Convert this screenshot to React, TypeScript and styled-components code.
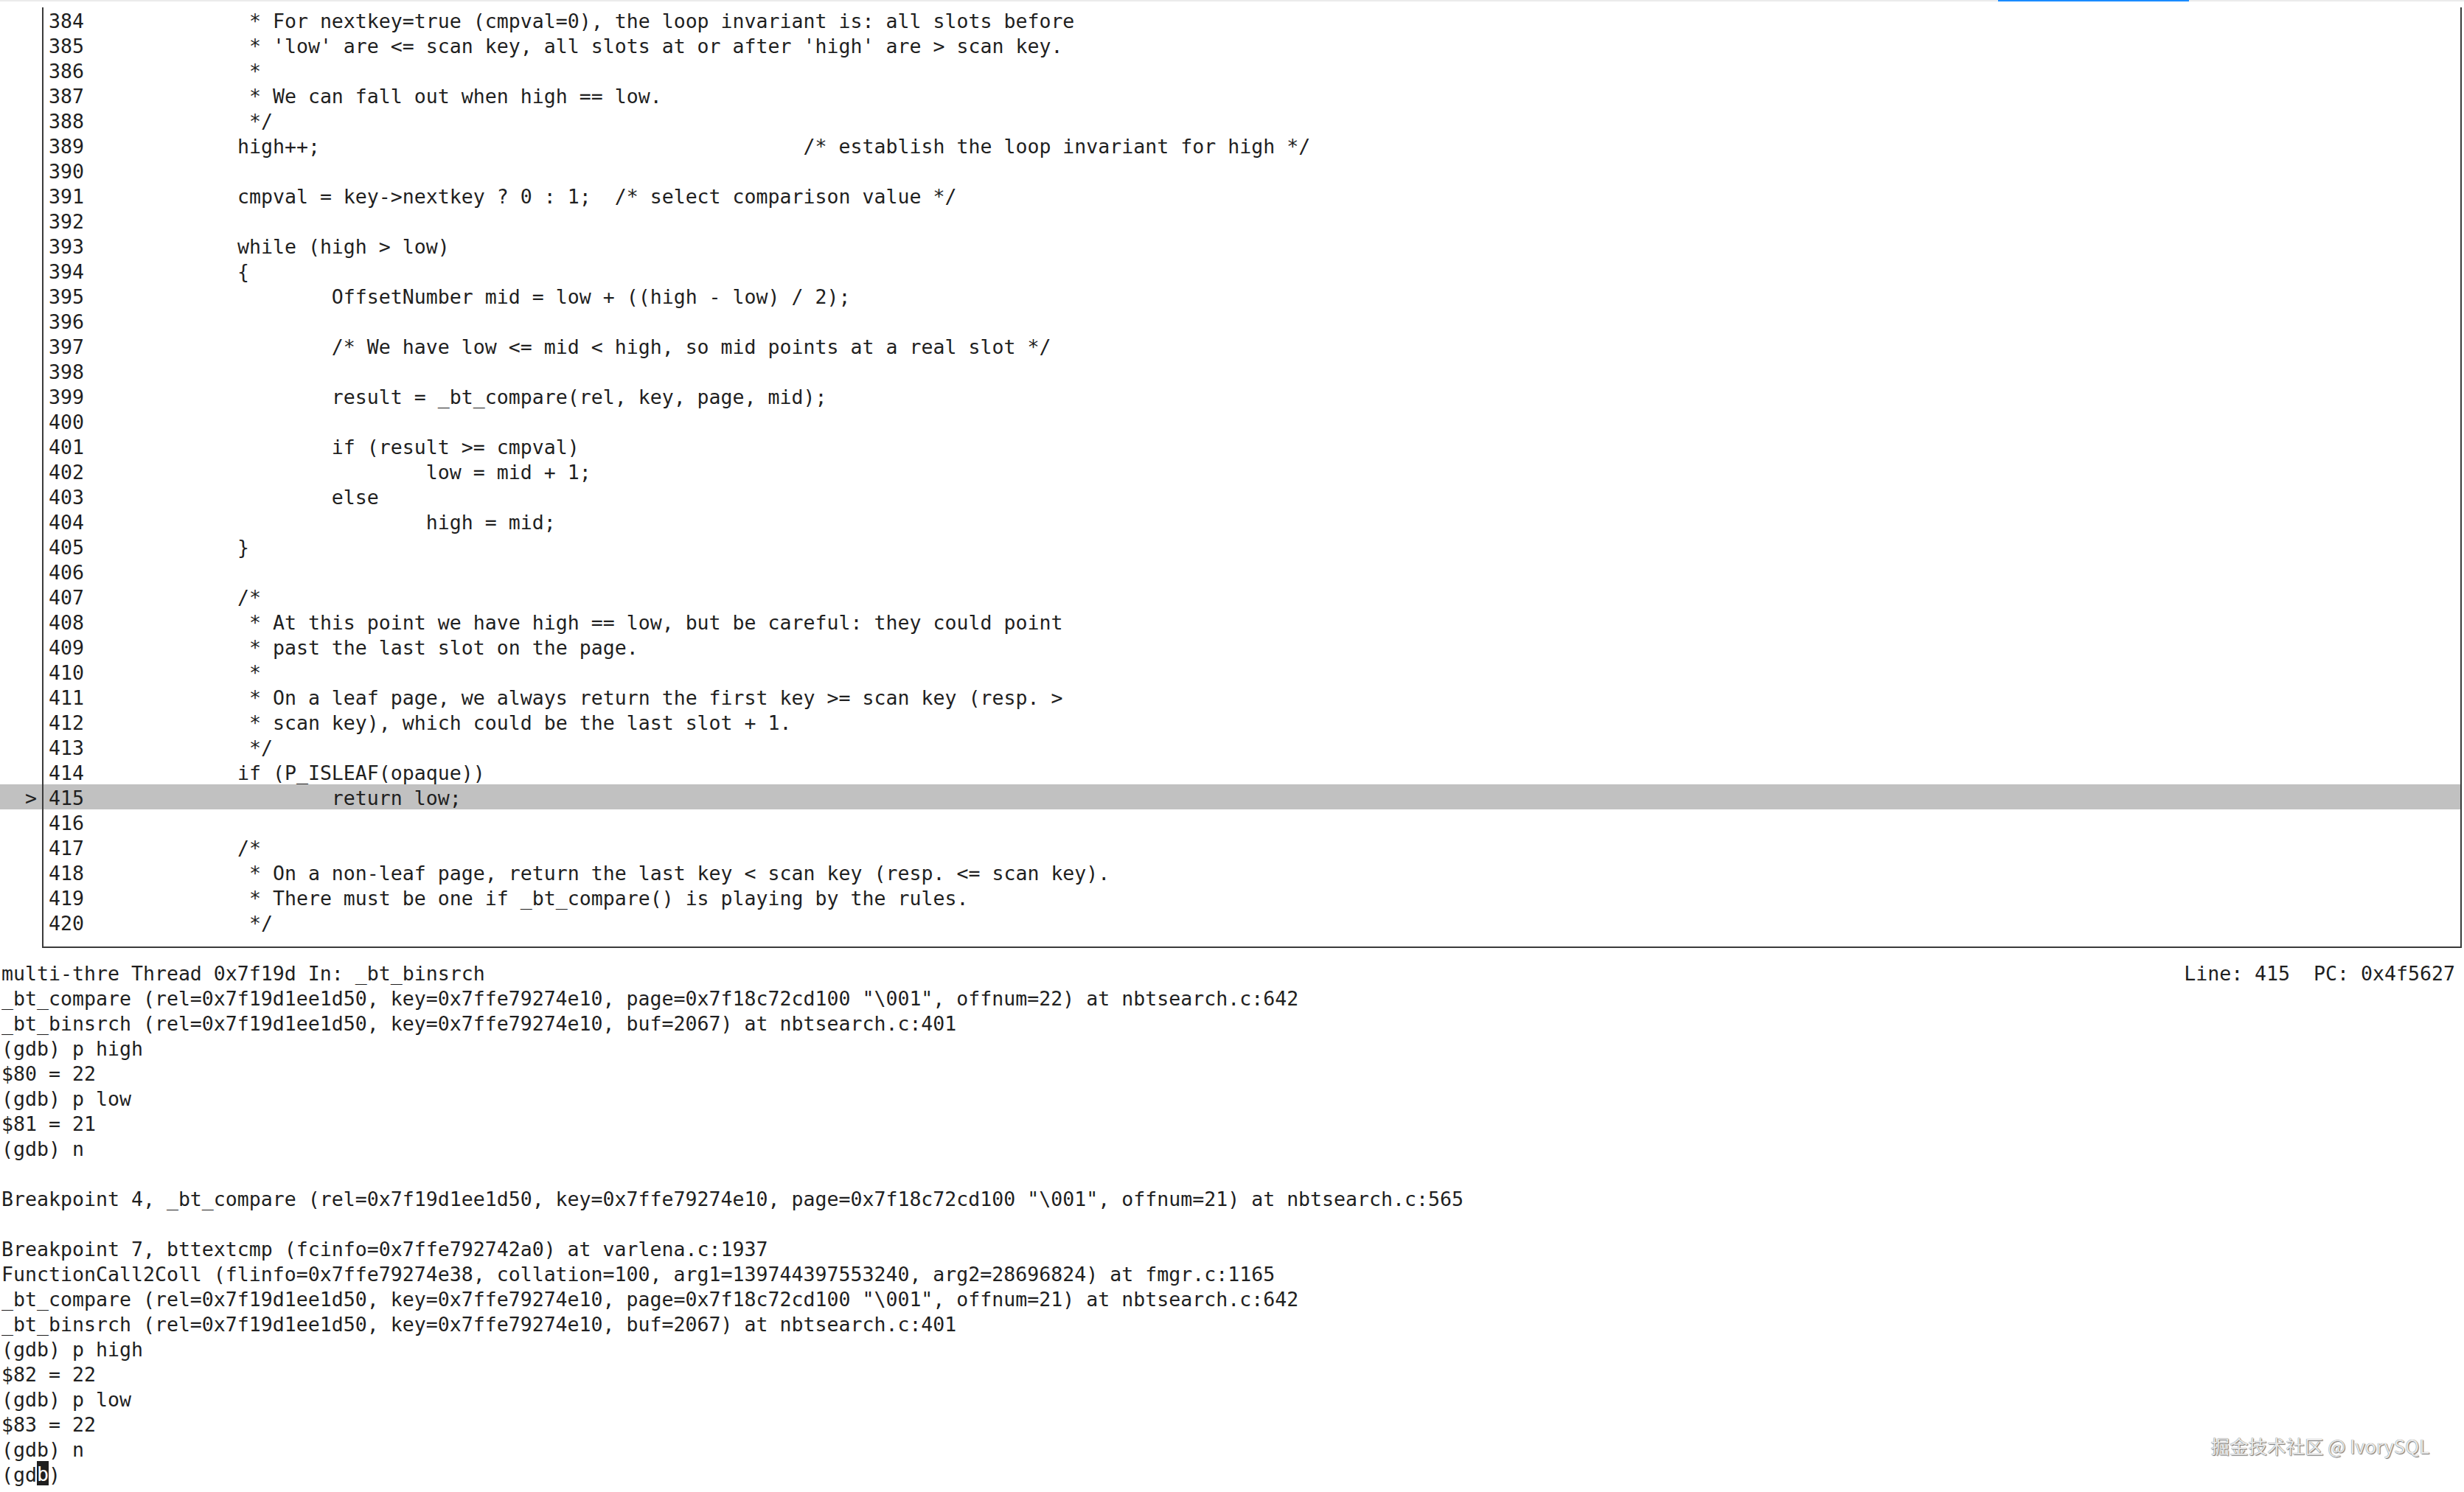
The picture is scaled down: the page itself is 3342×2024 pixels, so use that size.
import React from "react";
import styled, { createGlobalStyle } from "styled-components";

const Global = createGlobalStyle`
  html, body {
    margin: 0;
    padding: 0;
    background: #ffffff;
    overflow: hidden;
  }
  #root {
    width: 3342px;
    height: 2024px;
  }
`;

const Screen = styled.div`
  position: relative;
  width: 3342px;
  height: 2024px;
  display: flex;
  flex-direction: column;
  background: #ffffff;
  color: #1f1f1f;
  font-family: "DejaVu Sans Mono", "Liberation Mono", monospace;
  font-size: 26.57px;
  line-height: 34px;
`;

const TopBar = styled.div`
  height: 2px;
  display: flex;
  background: #ebebeb;
  margin-bottom: 8px;
`;

const Progress = styled.div`
  margin-left: 2710px;
  width: 259px;
  height: 2px;
  background: #1a8cff;
`;

const SourceWindow = styled.div`
  width: 3339px;
  display: flex;
  flex-direction: column;
`;

const SourceRow = styled.div<{ $active?: boolean }>`
  display: grid;
  grid-template-columns: 57px 1fr;
  height: 34px;
  background: ${(p) => (p.$active ? "#c1c1c1" : "transparent")};
`;

const Marker = styled.div`
  padding: 2px 0 0 34px;
  white-space: pre;
  overflow: hidden;
`;

const Body = styled.div`
  display: flex;
  border-left: 2px solid #3a3a3a;
  border-right: 2px solid #3a3a3a;
  padding: 2px 0 0 7px;
  white-space: pre;
  overflow: hidden;
`;

const LineNo = styled.span`
  width: 128px;
  flex: none;
`;

const Code = styled.span`
  white-space: pre;
`;

const BottomCap = styled.div`
  display: grid;
  grid-template-columns: 57px 1fr;
  height: 18px;
`;

const CapBody = styled.div`
  border-left: 2px solid #3a3a3a;
  border-right: 2px solid #3a3a3a;
  border-bottom: 2px solid #3a3a3a;
`;

const StatusLine = styled.div`
  margin-top: 16px;
  height: 34px;
  box-sizing: border-box;
  display: flex;
  justify-content: space-between;
  padding: 2px 12px 0 2px;
  white-space: pre;
  overflow: hidden;
`;

const Console = styled.div`
  display: flex;
  flex-direction: column;
  padding-left: 2px;
`;

const ConsoleLine = styled.div`
  height: 34px;
  box-sizing: border-box;
  padding-top: 2px;
  white-space: pre;
  overflow: hidden;
`;

const Cursor = styled.span`
  display: inline-block;
  height: 33px;
  margin-top: -2px;
  vertical-align: top;
  line-height: 36px;
  background: #1f1f1f;
  color: #ffffff;
`;

const Watermark = styled.div`
  position: absolute;
  right: 47px;
  top: 1944px;
  font-family: "Noto Sans CJK SC", "Noto Sans", sans-serif;
  font-size: 25.5px;
  line-height: 34px;
  color: #e9e9e9;
  text-shadow: 0 0 1px #5a5a5a, 1px 1px 1px #7a7a7a;
  white-space: pre;
`;

const T1 = "        ";
const T2 = T1 + T1;
const T3 = T2 + T1;

const sourceLines: [number, string][] = [
  [384, T1 + " * For nextkey=true (cmpval=0), the loop invariant is: all slots before"],
  [385, T1 + " * 'low' are <= scan key, all slots at or after 'high' are > scan key."],
  [386, T1 + " *"],
  [387, T1 + " * We can fall out when high == low."],
  [388, T1 + " */"],
  [389, T1 + "high++;" + " ".repeat(41) + "/* establish the loop invariant for high */"],
  [390, ""],
  [391, T1 + "cmpval = key->nextkey ? 0 : 1;  /* select comparison value */"],
  [392, ""],
  [393, T1 + "while (high > low)"],
  [394, T1 + "{"],
  [395, T2 + "OffsetNumber mid = low + ((high - low) / 2);"],
  [396, ""],
  [397, T2 + "/* We have low <= mid < high, so mid points at a real slot */"],
  [398, ""],
  [399, T2 + "result = _bt_compare(rel, key, page, mid);"],
  [400, ""],
  [401, T2 + "if (result >= cmpval)"],
  [402, T3 + "low = mid + 1;"],
  [403, T2 + "else"],
  [404, T3 + "high = mid;"],
  [405, T1 + "}"],
  [406, ""],
  [407, T1 + "/*"],
  [408, T1 + " * At this point we have high == low, but be careful: they could point"],
  [409, T1 + " * past the last slot on the page."],
  [410, T1 + " *"],
  [411, T1 + " * On a leaf page, we always return the first key >= scan key (resp. >"],
  [412, T1 + " * scan key), which could be the last slot + 1."],
  [413, T1 + " */"],
  [414, T1 + "if (P_ISLEAF(opaque))"],
  [415, T2 + "return low;"],
  [416, ""],
  [417, T1 + "/*"],
  [418, T1 + " * On a non-leaf page, return the last key < scan key (resp. <= scan key)."],
  [419, T1 + " * There must be one if _bt_compare() is playing by the rules."],
  [420, T1 + " */"],
];

const consoleLines: string[] = [
  '_bt_compare (rel=0x7f19d1ee1d50, key=0x7ffe79274e10, page=0x7f18c72cd100 "\\001", offnum=22) at nbtsearch.c:642',
  "_bt_binsrch (rel=0x7f19d1ee1d50, key=0x7ffe79274e10, buf=2067) at nbtsearch.c:401",
  "(gdb) p high",
  "$80 = 22",
  "(gdb) p low",
  "$81 = 21",
  "(gdb) n",
  "",
  'Breakpoint 4, _bt_compare (rel=0x7f19d1ee1d50, key=0x7ffe79274e10, page=0x7f18c72cd100 "\\001", offnum=21) at nbtsearch.c:565',
  "",
  "Breakpoint 7, bttextcmp (fcinfo=0x7ffe792742a0) at varlena.c:1937",
  "FunctionCall2Coll (flinfo=0x7ffe79274e38, collation=100, arg1=139744397553240, arg2=28696824) at fmgr.c:1165",
  '_bt_compare (rel=0x7f19d1ee1d50, key=0x7ffe79274e10, page=0x7f18c72cd100 "\\001", offnum=21) at nbtsearch.c:642',
  "_bt_binsrch (rel=0x7f19d1ee1d50, key=0x7ffe79274e10, buf=2067) at nbtsearch.c:401",
  "(gdb) p high",
  "$82 = 22",
  "(gdb) p low",
  "$83 = 22",
  "(gdb) n",
];

const CURRENT = 415;

export default function App() {
  return (
    <>
      <Global />
      <Screen>
        <TopBar>
          <Progress />
        </TopBar>
        <SourceWindow>
          {sourceLines.map(([n, text]) => (
            <SourceRow key={n} $active={n === CURRENT}>
              <Marker>{n === CURRENT ? ">" : ""}</Marker>
              <Body>
                <LineNo>{n}</LineNo>
                <Code>{text}</Code>
              </Body>
            </SourceRow>
          ))}
          <BottomCap>
            <div />
            <CapBody />
          </BottomCap>
        </SourceWindow>
        <StatusLine>
          <span>multi-thre Thread 0x7f19d In: _bt_binsrch</span>
          <span>Line: 415  PC: 0x4f5627</span>
        </StatusLine>
        <Console>
          {consoleLines.map((l, i) => (
            <ConsoleLine key={i}>{l}</ConsoleLine>
          ))}
          <ConsoleLine>
            (gd<Cursor>b</Cursor>)
          </ConsoleLine>
        </Console>
        <Watermark>掘金技术社区 @ IvorySQL</Watermark>
      </Screen>
    </>
  );
}
